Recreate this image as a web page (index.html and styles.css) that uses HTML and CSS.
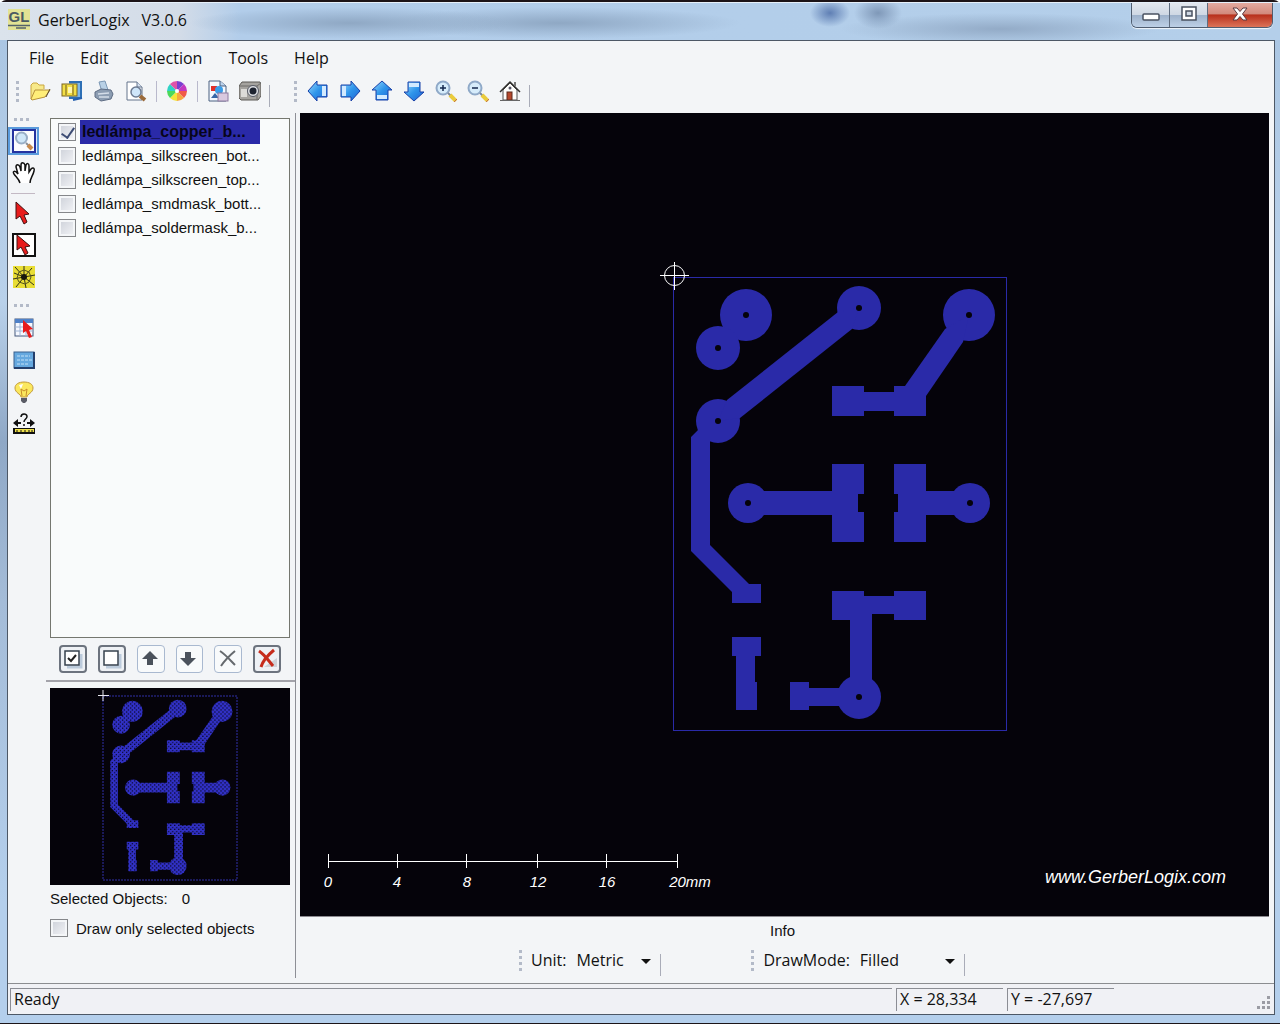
FILE: index.html
```html
<!DOCTYPE html>
<html lang="en">

<head>
    <meta charset="UTF-8">
    <meta name="viewport" content="width=device-width, initial-scale=1.0">
    <title>GerberLogix V3.0.6</title>
    <link rel="stylesheet" href="styles.css">
</head>

<body>
    <div class="window">

        <header class="titlebar">
            <svg class="app-icon" viewBox="0 0 24 24">
                <rect x="1" y="1" width="22" height="21" fill="#e8e25a" opacity=".6"/>
                <text x="12" y="14" text-anchor="middle" class="app-icon-text">GL</text>
                <path d="M1 17.500H23M9 20H19" stroke="#55636a" stroke-width="1.500"/>
            </svg>
            <h1 class="title">GerberLogix</h1>
            <span class="version">V3.0.6</span>
            <div class="window-buttons">
                <button class="win-btn" aria-label="Minimize">
                    <svg width="18" height="18" viewBox="0 0 18 18"><rect x="1" y="9" width="16" height="6" rx="1" fill="#fff" stroke="#4a5260" stroke-width="1.500"/></svg>
                </button>
                <button class="win-btn" aria-label="Maximize">
                    <svg width="18" height="18" viewBox="0 0 18 18"><path d="M2 2H16V15H2Z M6 6V11H12V6Z" fill="#fff" fill-rule="evenodd" stroke="#4a5260" stroke-width="1.500"/></svg>
                </button>
                <button class="win-btn close" aria-label="Close">
                    <svg width="18" height="18" viewBox="0 0 18 18"><path d="M2 3H6L9 6.500 12 3H16L11.500 9 16 15H12L9 11.500 6 15H2L6.500 9Z" fill="#fff" stroke="#5b3a42"/></svg>
                </button>
            </div>
        </header>

        <div class="client">
            <nav class="menu">
                <button>File</button>
                <button>Edit</button>
                <button>Selection</button>
                <button>Tools</button>
                <button>Help</button>
            </nav>

            <div class="toolbars">
                <div class="toolbar">
                    <span class="grip"></span>
                    <button aria-label="Open">
                        <svg viewBox="0 0 22 22"><path d="M2 19V5L4 3H8L10 5H15V9" fill="#f7e98a" stroke="#c9a640"/><path d="M2 19L6 10H21L16 17 3 20Z" fill="#ffee78" stroke="#b8923a"/><path d="M17 17L21 9" stroke="#5a4a2a"/></svg>
                    </button>
                    <button aria-label="Open archive">
                        <svg viewBox="0 0 22 22"><path d="M8 2H20V18H8" fill="#7db7ea" stroke="#2d6fb5" stroke-width="2"/><rect x="1" y="4" width="15" height="12" fill="#f2df45" stroke="#7a6420"/><path d="M5 5V15M12 5V15" stroke="#6a5420"/><rect x="7" y="7" width="4" height="6" fill="#fff6b0"/><path d="M12 20L21 18" stroke="#245fae" stroke-width="2"/></svg>
                    </button>
                    <button aria-label="Print">
                        <svg viewBox="0 0 22 22"><path d="M6 2L12 1 15 10 9 12Z" fill="#b9d1e6" stroke="#7c98b5"/><path d="M2 12L8 9 18 10 20 14 18 19 8 21 2 17Z" fill="#8c9db2" stroke="#5e6d84"/><path d="M5 14L16 13M6 17L16 17" stroke="#d4dde8" stroke-width="1.500"/></svg>
                    </button>
                    <button aria-label="Print preview">
                        <svg viewBox="0 0 22 22"><path d="M2 2H12L17 7V20H2Z" fill="#fff" stroke="#65748c"/><path d="M12 2V7H17" fill="#d7e2f2" stroke="#65748c"/><circle cx="11" cy="12" r="5" fill="#cfe6fa" stroke="#6d7b92" stroke-width="1.500"/><path d="M15 16L20 20" stroke="#9a6a3a" stroke-width="4"/></svg>
                    </button>
                    <span class="divider"></span>
                    <button aria-label="Colors">
                        <svg viewBox="0 0 22 22"><path d="M11 11V1A10 10 0 0 1 18 4Z" fill="#7a3fd0"/><path d="M11 11L18 4A10 10 0 0 1 21 11Z" fill="#c238c0"/><path d="M11 11H21A10 10 0 0 1 18 18Z" fill="#f05a48"/><path d="M11 11L18 18A10 10 0 0 1 11 21Z" fill="#f6a73e"/><path d="M11 11V21A10 10 0 0 1 4 18Z" fill="#f3e53a"/><path d="M11 11L4 18A10 10 0 0 1 1 11Z" fill="#4bd95a"/><path d="M11 11H1A10 10 0 0 1 4 4Z" fill="#2fd3c6"/><path d="M11 11L4 4A10 10 0 0 1 11 1Z" fill="#e052a8"/><circle cx="11" cy="11" r="2" fill="#fff"/></svg>
                    </button>
                    <span class="divider"></span>
                    <button aria-label="Export image">
                        <svg viewBox="0 0 22 22"><path d="M2 1H13L19 6V21H2Z" fill="#f4f9ff" stroke="#4b6180"/><path d="M13 1V6H19" fill="#bcd4ee" stroke="#4b6180"/><rect x="4" y="6" width="6" height="5" fill="#e0302a"/><circle cx="12" cy="10" r="4" fill="#3a9de8"/><path d="M4 18L8 13 12 18Z" fill="#3867a8"/><rect x="11" y="13" width="10" height="8" fill="#d9c9df" stroke="#8d7aa0"/></svg>
                    </button>
                    <button aria-label="Snapshot">
                        <svg viewBox="0 0 22 22"><path d="M0 6L3 2H21L22 4V16L19 20H2L0 18Z" fill="#a5a39f" stroke="#5a5855"/><path d="M0 6H18L22 3M18 6V20" stroke="#6d6b68" fill="none"/><rect x="2" y="9" width="6" height="8" fill="#dcdbd8"/><circle cx="14" cy="11" r="5.500" fill="#e0e2e6" stroke="#565a66"/><circle cx="14" cy="11" r="3.500" fill="#1d2330"/></svg>
                    </button>
                    <span class="endline"></span>
                </div>
                <div class="toolbar">
                    <span class="grip"></span>
                    <button aria-label="Pan left">
                        <svg viewBox="0 0 22 22"><path d="M1 11L10 1V5H20V17H10V21Z" fill="url(#arrowFill)" stroke="#1840a8"/><path d="M15 6H19V16H15Z" fill="#d2eaff"/></svg>
                    </button>
                    <button aria-label="Pan right">
                        <svg viewBox="0 0 22 22"><path d="M21 11L12 1V5H2V17H12V21Z" fill="url(#arrowFill)" stroke="#1840a8"/><path d="M3 6H7V16H3Z" fill="#d2eaff"/></svg>
                    </button>
                    <button aria-label="Pan up">
                        <svg viewBox="0 0 22 22"><path d="M11 1L21 10H17V20H5V10H1Z" fill="url(#arrowFill)" stroke="#1840a8"/><path d="M6 15H16V19H6Z" fill="#d2eaff"/></svg>
                    </button>
                    <button aria-label="Pan down">
                        <svg viewBox="0 0 22 22"><path d="M11 21L21 12H17V2H5V12H1Z" fill="url(#arrowFill)" stroke="#1840a8"/><path d="M6 3H16V7H6Z" fill="#d2eaff"/></svg>
                    </button>
                    <button aria-label="Zoom in">
                        <svg viewBox="0 0 22 22"><circle cx="8" cy="8" r="6.500" fill="#d6ecfb" stroke="#8fa9c8" stroke-width="2"/><path d="M8 5V11M5 8H11" stroke="#14284e" stroke-width="1.500"/><path d="M13 13L16 16" stroke="#7b8798" stroke-width="2"/><path d="M15 15L21 21" stroke="#eacb3c" stroke-width="4"/><path d="M19 22L22 19" stroke="#c9704a"/></svg>
                    </button>
                    <button aria-label="Zoom out">
                        <svg viewBox="0 0 22 22"><circle cx="8" cy="8" r="6.500" fill="#d6ecfb" stroke="#8fa9c8" stroke-width="2"/><path d="M5 8H11" stroke="#14284e" stroke-width="1.500"/><path d="M13 13L16 16" stroke="#7b8798" stroke-width="2"/><path d="M15 15L21 21" stroke="#eacb3c" stroke-width="4"/><path d="M19 22L22 19" stroke="#c9704a"/></svg>
                    </button>
                    <button aria-label="Home view">
                        <svg viewBox="0 0 22 22"><path d="M4 10L11 3 18 10V20H4Z" fill="#fdfdfb" stroke="#555"/><path d="M1 12L11 2 21 12" fill="none" stroke="#30302e" stroke-width="1.500"/><path d="M16 2V6" stroke="#777" stroke-width="2"/><circle cx="11" cy="8" r="1.500" fill="#556"/><rect x="8" y="12" width="5" height="8" fill="#b5482c" stroke="#5c2a1c"/><path d="M1 20.500H21" stroke="#666"/></svg>
                    </button>
                    <span class="endline"></span>
                </div>
            </div>

            <div class="main">
                <div class="tools">
                    <span class="dots"></span>
                    <button class="active" aria-label="Zoom window">
                        <svg viewBox="0 0 24 24"><rect x="1" y="1" width="22" height="22" fill="#fbfcfe" stroke="#2433a0" stroke-width="2"/><circle cx="9.500" cy="9" r="5.500" fill="#cfe7f8" stroke="#98aec6" stroke-width="2"/><path d="M14 14L17 17" stroke="#8a8f98" stroke-width="2"/><path d="M16 16L20 20" stroke="#c98a4c" stroke-width="4"/></svg>
                    </button>
                    <button aria-label="Pan">
                        <svg viewBox="0 0 24 24"><path d="M8 22C7 18 4 16 2 13 0 10 3 9 6 13L4 6C4 3 7 3 8 6L9 10V4C9 1 12 1 13 4V10L14 4C15 2 17 2 17 5V11L19 8C21 6 23 7 22 10 21 15 18 17 18 22" fill="#fff" stroke="#111" stroke-width="1.500"/></svg>
                    </button>
                    <span class="tools-line"></span>
                    <button aria-label="Select">
                        <svg viewBox="0 0 24 24"><path d="M4 1V18L8 15 12 23 15 21 12 14 17 13Z" fill="#e81c1c" stroke="#401010"/></svg>
                    </button>
                    <button aria-label="Select in window">
                        <svg viewBox="0 0 24 24"><rect x="1" y="1" width="22" height="22" fill="#fff" stroke="#111" stroke-width="2"/><path d="M5 2V17L9 14 13 22 16 20 13 14 18 13Z" fill="#e81c1c" stroke="#401010"/></svg>
                    </button>
                    <button aria-label="Highlight net">
                        <svg viewBox="0 0 24 24"><rect x="1" y="1" width="22" height="22" fill="#e8dd35"/><path d="M12 12L3 2M12 12L12 1M12 12L20 3M12 12L23 10M12 12L22 20M12 12L14 23M12 12L4 22M12 12L1 14M12 12L2 8" stroke="#33331c"/><path d="M7 7L12 5 17 7 19 12 17 17 13 19 7 17 5 13Z" fill="none" stroke="#55551f"/><circle cx="12" cy="12" r="3" fill="#16160c"/></svg>
                    </button>
                    <span class="dots second"></span>
                    <button aria-label="Object table">
                        <svg viewBox="0 0 24 24"><rect x="3" y="3" width="18" height="17" fill="#f5f8ff" stroke="#44587c"/><rect x="3" y="3" width="18" height="4" fill="#4f81c8"/><path d="M3 11H21M3 15H21M8 7V20M14 7V20" stroke="#9fb4d4"/><path d="M11 4V17L14 15 17 22 20 21 17 14 21 13Z" fill="#e81c1c"/></svg>
                    </button>
                    <button aria-label="Layer info">
                        <svg viewBox="0 0 24 24"><rect x="2" y="4" width="20" height="16" fill="#65a8df" stroke="#38618f"/><path d="M5 8H18M5 12H20M5 16H17" stroke="#c3e1f7" stroke-dasharray="3 1"/><path d="M22 4V20H2" fill="none" stroke="#243f6c" stroke-width="2"/></svg>
                    </button>
                    <button aria-label="Tips">
                        <svg viewBox="0 0 24 24"><path d="M9 17C9 14 3 13 3 8 3 4 7 2 12 2S21 4 21 8C21 13 15 14 15 17Z" fill="#fbe85e" stroke="#c29a3a"/><path d="M7 5L11 4 9 9Z" fill="#fff"/><path d="M10 16L9 9 12 11 15 9 14 16" fill="none" stroke="#c78d2a"/><path d="M9 18H15V21L13 23H11L9 21Z" fill="#5a5c66"/></svg>
                    </button>
                    <button aria-label="Measure">
                        <svg viewBox="0 0 24 24"><path d="M1 11L6 7V10H9V12H6V15ZM23 11L18 7V10H15V12H18V15Z" fill="#111"/><path d="M9 5C9 1 15 1 15 4.500 15 7 12 7 12 10M12 12V14" fill="none" stroke="#111" stroke-width="1.500"/><rect x="1" y="16" width="22" height="6" fill="#111"/><path d="M3 18.500H22" stroke="#eee04a" stroke-width="3"/><path d="M5 20V18M9 20V18M13 20V18M17 20V18M20 20V18" stroke="#111"/></svg>
                    </button>
                </div>

                <aside class="side">
                    <div class="layers">
                        <label class="layer selected"><input type="checkbox" checked><span>ledlámpa_copper_b...</span></label>
                        <label class="layer"><input type="checkbox"><span>ledlámpa_silkscreen_bot...</span></label>
                        <label class="layer"><input type="checkbox"><span>ledlámpa_silkscreen_top...</span></label>
                        <label class="layer"><input type="checkbox"><span>ledlámpa_smdmask_bott...</span></label>
                        <label class="layer"><input type="checkbox"><span>ledlámpa_soldermask_b...</span></label>
                    </div>
                    <div class="layer-buttons">
                        <button aria-label="Check all"><svg viewBox="0 0 22 22"><path d="M5 19H19V6" fill="none" stroke="#bccbdc" stroke-width="3"/><rect x="3" y="3" width="14" height="14" fill="#fff" stroke="#36414e" stroke-width="1.500"/><path d="M6 10L9 13 14 7" fill="none" stroke="#222" stroke-width="2"/></svg></button>
                        <button aria-label="Uncheck all"><svg viewBox="0 0 22 22"><path d="M5 19H19V6" fill="none" stroke="#bccbdc" stroke-width="3"/><rect x="3" y="3" width="14" height="14" fill="#fff" stroke="#36414e" stroke-width="1.500"/></svg></button>
                        <button class="light" aria-label="Move up"><svg viewBox="0 0 22 22"><path d="M10 3L18 11H13V17H7V11H2Z" fill="#4b525c"/></svg></button>
                        <button class="light" aria-label="Move down"><svg viewBox="0 0 22 22"><path d="M10 18L18 10H13V4H7V10H2Z" fill="#4b525c"/></svg></button>
                        <button class="light" aria-label="Remove"><svg viewBox="0 0 22 22"><path d="M3 3C9 7 13 12 18 17M18 3C12 8 8 12 4 18" fill="none" stroke="#666a6e" stroke-width="2"/></svg></button>
                        <button aria-label="Remove all"><svg viewBox="0 0 22 22"><path d="M8 19H21V10Z" fill="#cfd2d8"/><path d="M3 3C9 7 12 12 17 18M18 2C12 7 7 12 5 19" fill="none" stroke="#c62c1c" stroke-width="3"/></svg></button>
                    </div>
                    <div class="preview">
                        <svg viewBox="50 687 240 197">
                            <rect x="103" y="695" width="134" height="184" class="preview-frame"/>
                            <use href="#copper" fill="url(#hatch)" transform="translate(103 695) scale(.402 .405) translate(-673 -277)"/>
                            <path d="M103 689V700M98 694.500H109" stroke="#e8e8f0"/>
                        </svg>
                    </div>
                    <p class="selected-count">Selected Objects: <span>0</span></p>
                    <label class="draw-only"><input type="checkbox">Draw only selected objects</label>
                </aside>

                <section class="view">
                    <div class="canvas">
                        <svg viewBox="300 113 969 803">
                            <defs>
                                <linearGradient id="arrowFill" x1="0" y1="0" x2="1" y2="1">
                                    <stop offset="0" stop-color="#9bdcff"/>
                                    <stop offset=".5" stop-color="#2f95ea"/>
                                    <stop offset="1" stop-color="#1c62d4"/>
                                </linearGradient>
                                <pattern id="hatch" width="10" height="10" patternUnits="userSpaceOnUse">
                                    <rect width="10" height="10" fill="#3030c4"/>
                                    <path d="M5 0H8V3H5ZM0 5H3V8H0Z" fill="#08051c"/>
                                </pattern>
                                <g id="copper">
                                    <circle cx="746" cy="315" r="26"/>
                                    <circle cx="718" cy="348" r="22"/>
                                    <circle cx="859" cy="308" r="22"/>
                                    <circle cx="969" cy="315" r="26"/>
                                    <circle cx="718" cy="421" r="22"/>
                                    <circle cx="748" cy="503" r="20"/>
                                    <circle cx="970" cy="503" r="20"/>
                                    <circle cx="859" cy="697" r="22"/>
                                    <polygon points="838,312 859,308 852,329 740,418 718,421 727,400"/>
                                    <polygon points="691,437 698,430 710,430 710,545 749,584 749,596 736,596 691,551"/>
                                    <polygon points="945,329 969,315 963,342 926,396 905,396 905,386"/>
                                    <path d="M832 386H864V392H894V386H926V416H894V411H864V416H832Z"/>
                                    <path d="M748 491H832V464H864V494H858V512H864V542H832V515H748Z"/>
                                    <path d="M970 491H926V464H894V494H898V512H894V542H926V515H970Z"/>
                                    <path d="M732 584H761V603H732Z"/>
                                    <path d="M732 637H761V656H755V682H757V710H736V656H732Z"/>
                                    <path d="M832 591H864V596H894V591H926V620H894V614H872V697H850V620H832Z"/>
                                    <path d="M790 682H809V688H859V706H809V710H790Z"/>
                                </g>
                            </defs>
                            <rect x="673.500" y="277.500" width="333" height="453" class="board-frame"/>
                            <use href="#copper" class="board-copper"/>
                            <g class="holes">
                                <circle cx="746" cy="315" r="3"/>
                                <circle cx="718" cy="348" r="3"/>
                                <circle cx="859" cy="308" r="3"/>
                                <circle cx="969" cy="315" r="3"/>
                                <circle cx="718" cy="421" r="3"/>
                                <circle cx="748" cy="503" r="3"/>
                                <circle cx="970" cy="503" r="3"/>
                                <circle cx="859" cy="697" r="3"/>
                            </g>
                            <g class="origin">
                                <circle cx="674.500" cy="275.500" r="10"/>
                                <path d="M660 275.500H689M674.500 262V290"/>
                            </g>
                            <path class="ruler" d="M328.500 854V868M397.500 854V868M466.500 854V868M537.500 854V868M606.500 854V868M677.500 854V868M328 861.500H678"/>
                            <g class="ruler-text">
                                <text x="328" y="887">0</text>
                                <text x="397" y="887">4</text>
                                <text x="467" y="887">8</text>
                                <text x="538" y="887">12</text>
                                <text x="607" y="887">16</text>
                                <text x="690" y="887">20mm</text>
                            </g>
                            <text class="site" x="1226" y="883">www.GerberLogix.com</text>
                        </svg>
                    </div>
                    <div class="info">Info</div>
                    <div class="options">
                        <span class="grip"></span>
                        <label for="unit">Unit:</label>
                        <span class="drop unit"><select id="unit"><option>Metric</option></select></span>
                        <span class="endline"></span>
                        <span class="grip mode-grip"></span>
                        <label for="mode">DrawMode:</label>
                        <span class="drop mode"><select id="mode"><option>Filled</option></select></span>
                        <span class="endline"></span>
                    </div>
                </section>
            </div>

            <footer class="status">
                <span class="pane ready">Ready</span>
                <span class="pane">X = 28,334</span>
                <span class="pane">Y = -27,697</span>
                <svg class="size-grip" width="16" height="16" viewBox="0 0 16 16"><path d="M11 1H14V4H11ZM6 6H9V9H6ZM11 6H14V9H11ZM1 11H4V14H1ZM6 11H9V14H6ZM11 11H14V14H11Z" fill="#9b9ca4"/></svg>
            </footer>
        </div>
    </div>
</body>

</html>
```

FILE: styles.css
```css
* {
    box-sizing: border-box;
}

body {
    margin: 0;
    font-family: "Open Sans", "Noto Sans", sans-serif;
    font-size: 16px;
    color: #111;
}

button,
select {
    font: inherit;
    color: inherit;
    background: none;
    border: none;
    padding: 0;
    margin: 0;
}

svg {
    display: block;
}

/* window frame */
.window {
    min-height: 100vh;
    display: flex;
    flex-direction: column;
    padding: 0 5px 8px 7px;
    background: linear-gradient(to bottom, #a9c5e2 0, #b9d1ea 300px, #8fa8c6 440px, #a4bcd8 600px, #b4cfec 900px);
    border-top: 2px solid #1c1418;
    border-bottom: 2px solid #1c1418;
    border-radius: 6px 6px 0 0;
}

.titlebar {
    height: 38px;
    display: flex;
    align-items: center;
    margin: 0 -5px 0 -7px;
    padding: 0 7px 3px 7px;
    border-top: 1px solid #e6f0fa;
    background:
        radial-gradient(ellipse 20px 14px at 830px 10px, #5f7fb4, transparent),
        radial-gradient(ellipse 24px 16px at 878px 10px, #7f98b8, transparent),
        radial-gradient(ellipse 160px 16px at 350px 20px, #8fa8c4, transparent),
        radial-gradient(ellipse 180px 16px at 560px 20px, #8fa8c4, transparent),
        radial-gradient(ellipse 160px 16px at 1000px 26px, #93abc7, transparent),
        linear-gradient(to right, #dbe3ec 0, #d3dce8 180px, #b2cdea 240px, #b4cfea 100%);
}

.app-icon {
    width: 24px;
    height: 24px;
    margin-right: 7px;
}

.app-icon-text {
    font: bold 15px "Liberation Sans", sans-serif;
    fill: #4b5a62;
}

.title {
    margin: 0 12px 0 0;
    font-size: 16px;
    font-weight: normal;
}

.window-buttons {
    display: flex;
    align-self: flex-start;
    margin-left: auto;
    height: 25px;
    border: 1px solid #4f5d70;
    border-top: none;
    border-radius: 0 0 6px 6px;
    overflow: hidden;
    box-shadow: 0 1px 1px #f2f7fc;
}

.win-btn {
    width: 38px;
    padding-bottom: 2px;
    display: flex;
    align-items: center;
    justify-content: center;
    border-right: 1px solid #5f6d80;
    background: linear-gradient(to bottom, #e3e7ee 0, #cfd8e4 48%, #9db1ca 50%, #bdd0e6 100%);
}

.win-btn.close {
    width: 64px;
    border-right: none;
    background: linear-gradient(to bottom, #e3aaa0 0, #d28a7c 45%, #b8301c 50%, #dc7358 100%);
}

.client {
    flex: 1;
    display: flex;
    flex-direction: column;
    border: 1px solid #4d5866;
    background: #f3f5f7;
}

/* menu and toolbars */
.menu {
    height: 33px;
    display: flex;
    align-items: center;
    gap: 26px;
    padding-left: 21px;
}

.toolbars {
    height: 36px;
    display: flex;
    align-items: center;
    gap: 24px;
    padding: 0 0 2px 8px;
}

.toolbar {
    display: flex;
    align-items: center;
}

.toolbar button {
    width: 32px;
    height: 32px;
    display: flex;
    align-items: center;
    justify-content: center;
}

.toolbar svg {
    width: 22px;
    height: 22px;
}

.grip {
    width: 3px;
    height: 21px;
    margin-right: 5px;
    background: repeating-linear-gradient(to bottom, #b3bac8 0, #b3bac8 3px, transparent 3px, transparent 6px);
}

.divider {
    width: 1px;
    height: 21px;
    margin: 0 4px;
    background: #b9b9cc;
}

.endline {
    width: 1px;
    height: 22px;
    margin-left: 3px;
    align-self: flex-end;
    background: #a9acb8;
}

.main {
    flex: 1;
    display: flex;
}

/* left tool strip */
.tools {
    width: 38px;
    padding-top: 4px;
    display: flex;
    flex-direction: column;
}

.tools button {
    width: 31px;
    height: 32px;
    display: flex;
    align-items: center;
    justify-content: center;
}

.tools .active {
    height: 28px;
    margin: 2px 0;
    border: 2px solid #5a9bdc;
    background: #dcecfb;
}

.tools svg {
    width: 24px;
    height: 24px;
}

.dots {
    width: 15px;
    height: 3px;
    margin: 4px 0 4px 6px;
    background: repeating-linear-gradient(to right, #b3bac8 0, #b3bac8 3px, transparent 3px, transparent 6px);
}

.dots.second {
    margin: 11px 0 5px 6px;
}

.tools-line {
    width: 24px;
    height: 1px;
    margin: 4px 0 3px 3px;
    background: #c3b9c4;
}

/* layer panel */
.side {
    width: 250px;
    margin-top: 3px;
    margin-bottom: 5px;
    padding: 5px 5px 0 4px;
    display: flex;
    flex-direction: column;
    border-right: 1px solid #8d8f96;
    font-family: "Liberation Sans", sans-serif;
    font-size: 15px;
}

.layers {
    flex: 1;
    padding: 1px 7px;
    border: 1px solid #75776f;
    background: #f9fbfb;
}

.layer {
    height: 24px;
    display: flex;
    align-items: center;
    gap: 4px;
    white-space: nowrap;
}

.layer span {
    padding: 0 2px;
    line-height: 24px;
}

.layer.selected span {
    width: 180px;
    background: #2a2aa8;
    color: #07051a;
    font-size: 16px;
    font-weight: bold;
}

input[type="checkbox"] {
    appearance: none;
    width: 18px;
    height: 18px;
    margin: 0;
    flex: none;
    border: 1px solid #85878a;
    outline: 2px solid #f4f6f8;
    outline-offset: -3px;
    background: linear-gradient(135deg, #ccd0d8, #f4f5f8);
}

input[type="checkbox"]:checked::after {
    content: "";
    display: block;
    width: 6px;
    height: 11px;
    margin: 1px 0 0 5px;
    border: solid #3c4c74;
    border-width: 0 2px 2px 0;
    transform: rotate(35deg);
}

.layer-buttons {
    display: flex;
    gap: 11px;
    padding: 7px 9px;
}

.layer-buttons button {
    width: 28px;
    height: 28px;
    display: flex;
    align-items: center;
    justify-content: center;
    border: 2px solid #6c737e;
    border-radius: 4px;
    background: #eef1f5;
}

.layer-buttons .light {
    border: 1px solid #a9b9d0;
    background: #f8fafb;
}

.layer-buttons svg {
    width: 22px;
    height: 22px;
}

.preview {
    margin: 0 -5px 0 -4px;
    padding: 6px 5px 0 4px;
    border-top: 2px solid #a3a3aa;
}

.preview svg {
    width: 100%;
    background: #05030a;
}

.preview-frame {
    fill: none;
    stroke: #3030a8;
    stroke-dasharray: 2 1;
}

.selected-count {
    margin: 0;
    line-height: 28px;
}

.selected-count span {
    margin-left: 10px;
}

.draw-only {
    height: 30px;
    margin-bottom: 35px;
    display: flex;
    align-items: center;
    gap: 8px;
}

/* drawing area */
.view {
    flex: 1;
    min-width: 0;
    margin: 3px 5px 0 4px;
    display: flex;
    flex-direction: column;
}

.canvas {
    flex: 1;
    min-height: 0;
    background: #05030a;
    border-bottom: 1px solid #8c8a90;
}

.canvas svg {
    width: 100%;
}

.board-frame {
    fill: none;
    stroke: #2a2aa8;
}

.board-copper {
    fill: #2a2aa8;
}

.holes {
    fill: #05030a;
}

.origin,
.ruler {
    fill: none;
    stroke: #fff;
}

.ruler-text {
    font: italic 15px "Liberation Sans", sans-serif;
    fill: #fff;
    text-anchor: middle;
}

.site {
    font: italic 18px "Liberation Sans", sans-serif;
    fill: #fff;
    text-anchor: end;
}

.info {
    height: 27px;
    line-height: 28px;
    padding-right: 4px;
    text-align: center;
    font-family: "Liberation Sans", sans-serif;
    font-size: 15px;
}

.options {
    height: 39px;
    display: flex;
    align-items: center;
    padding: 0 0 7px 219px;
}

.options .grip {
    margin-right: 9px;
}

.options .mode-grip {
    margin-left: 90px;
}

.options .endline {
    margin: 0;
}

.drop {
    position: relative;
    margin-left: 10px;
}

.drop select {
    appearance: none;
    width: 100%;
}

.drop::after {
    content: "";
    position: absolute;
    right: 9px;
    top: 10px;
    border: 5px solid transparent;
    border-top-color: #111;
    border-bottom: none;
    pointer-events: none;
}

.unit {
    width: 84px;
}

.mode {
    width: 104px;
}

/* status bar */
.status {
    height: 31px;
    display: flex;
    gap: 4px;
    padding: 4px 2px 3px 2px;
    border-top: 1px solid #8b8d90;
    background: #f0f1f5;
}

.pane {
    width: 107px;
    padding-left: 3px;
    line-height: 20px;
    border-top: 1px solid #8b8d94;
    border-left: 1px solid #8b8d94;
}

.pane.ready {
    flex: 1;
}

.size-grip {
    align-self: flex-end;
    margin-left: 138px;
}
```
